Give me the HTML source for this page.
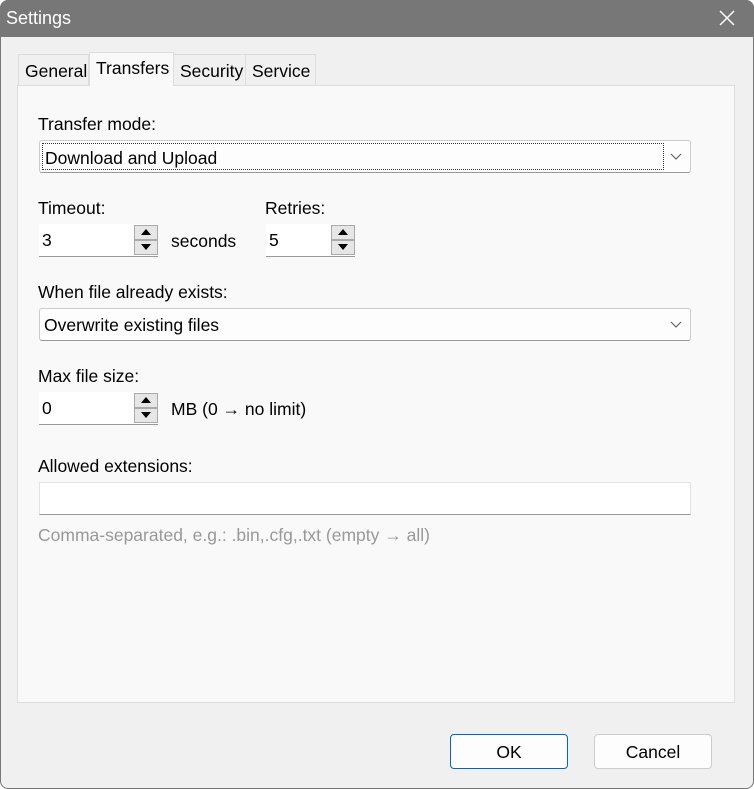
<!DOCTYPE html><html><head><style>
*{box-sizing:border-box}
body{margin:0;width:754px;height:789px;overflow:hidden;background:#fff;font-family:"Liberation Sans",sans-serif;font-size:17.5px;color:#000}
.win{position:absolute;left:0;top:0;width:754px;height:789px;background:#f0f0f0;border-radius:8px;overflow:hidden}
.frame{position:absolute;left:0;top:0;width:754px;height:789px;border:1px solid #777;border-radius:8px;z-index:9}
.title{position:absolute;left:0;top:0;width:754px;height:37px;background:#777;color:#fff;font-size:18px}
.title span{position:absolute;left:6px;top:8px}
.close{position:absolute;left:716px;top:7px;width:22px;height:22px}
.tab{position:absolute;top:54px;height:31px;background:#f0f0f0;border:1px solid #ddd;border-bottom:none;padding:6px 0 0 6px;white-space:nowrap}
.tab.sel{top:52px;height:34px;background:#f9f9f9;padding-top:5px;z-index:2}
.panel{position:absolute;left:17px;top:85px;width:718px;height:618px;background:#f9f9f9;border:1px solid #ddd}
.t{position:absolute;white-space:nowrap}
.combo{position:absolute;left:39px;width:652px;height:33px;background:#fdfdfd;border:1px solid #ccc;border-bottom-color:#999;border-radius:3px}
.combo .tx{position:absolute;left:2px;top:2px;height:27px;width:622px;padding:4px 2px;}
.chev{position:absolute;right:8px;top:12px}
.spin{position:absolute;height:33px;background:#fff;border-bottom:1px solid #999}
.spin .v{position:absolute;left:3px;top:6px}
.sb{position:absolute;right:0;width:24px;height:15px;background:#e6e6e6;border:1px solid #aaa}
.sb svg{position:absolute;left:6px;top:3px}
.btn{position:absolute;top:734px;width:118px;height:35px;background:#fdfdfd;border:1px solid #ccc;border-radius:4px;text-align:center;padding-top:7px}
</style></head><body><div class="win">
<div class="title"><span>Settings</span>
<svg class="close" viewBox="0 0 22 22"><path d="M4 4L18 18M18 4L4 18" stroke="#fff" stroke-width="1.5"/></svg></div>
<div class="panel"></div>
<div class="tab" style="left:18px;width:71px">General</div>
<div class="tab sel" style="left:89px;width:85px">Transfers</div>
<div class="tab" style="left:173px;width:73px">Security</div>
<div class="tab" style="left:245px;width:71px">Service</div>
<div class="t" style="left:38px;top:114px">Transfer mode:</div>
<div class="combo" style="top:140px"><div class="tx" style="border:1px dotted #333">Download and Upload</div><svg class="chev" width="12" height="8"><path d="M1 1L6 6L11 1" fill="none" stroke="#555"/></svg></div>
<div class="t" style="left:38px;top:198px">Timeout:</div>
<div class="t" style="left:265px;top:198px">Retries:</div>
<div class="spin" style="left:39px;top:224px;width:119px"><span class="v">3</span><div class="sb" style="top:1px"><svg width="10" height="6"><path d="M0 6L5 0L10 6Z"/></svg></div><div class="sb" style="top:16px"><svg width="10" height="6"><path d="M0 0L5 6L10 0Z"/></svg></div></div>
<div class="t" style="left:171px;top:231px">seconds</div>
<div class="spin" style="left:266px;top:224px;width:89px"><span class="v">5</span><div class="sb" style="top:1px"><svg width="10" height="6"><path d="M0 6L5 0L10 6Z"/></svg></div><div class="sb" style="top:16px"><svg width="10" height="6"><path d="M0 0L5 6L10 0Z"/></svg></div></div>
<div class="t" style="left:38px;top:282px">When file already exists:</div>
<div class="combo" style="top:308px"><div class="tx">Overwrite existing files</div><svg class="chev" width="12" height="8"><path d="M1 1L6 6L11 1" fill="none" stroke="#555"/></svg></div>
<div class="t" style="left:38px;top:366px">Max file size:</div>
<div class="spin" style="left:39px;top:392px;width:119px"><span class="v">0</span><div class="sb" style="top:1px"><svg width="10" height="6"><path d="M0 6L5 0L10 6Z"/></svg></div><div class="sb" style="top:16px"><svg width="10" height="6"><path d="M0 0L5 6L10 0Z"/></svg></div></div>
<div class="t" style="left:171px;top:399px">MB (0 → no limit)</div>
<div class="t" style="left:38px;top:456px">Allowed extensions:</div>
<div class="spin" style="left:39px;top:482px;width:652px;border:1px solid #e3e3e3;border-bottom-color:#999"></div>
<div class="t" style="left:38px;top:525px;color:#999">Comma-separated, e.g.: .bin,.cfg,.txt (empty → all)</div>
<div class="btn" style="left:450px;border-color:#0067c0">OK</div>
<div class="btn" style="left:594px">Cancel</div>
</div><div class="frame"></div></body></html>
